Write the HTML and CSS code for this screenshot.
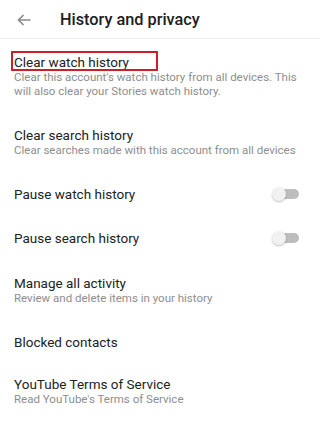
FILE: index.html
```html
<!DOCTYPE html>
<html>
<head>
<meta charset="utf-8">
<link rel="stylesheet" href="styles.css">
</head>
<body>
<div class="header">
  <svg class="back" width="14" height="12" viewBox="0 0 14 12"><path d="M13.5 6H1.5M6.5 1L1.5 6L6.5 11" fill="none" stroke="#8a8a8a" stroke-width="1.6"/></svg>
  <div class="title">History and privacy</div>
</div>
<div class="list">
  <div class="item two">
    <div class="t">Clear watch history</div>
    <div class="s">Clear this account's watch history from all devices. This will also clear your Stories watch history.</div>
    <div class="mark"></div>
  </div>
  <div class="item two">
    <div class="t">Clear search history</div>
    <div class="s">Clear searches made with this account from all devices</div>
  </div>
  <div class="item one row">
    <div class="t">Pause watch history</div>
    <div class="toggle"><div class="track"></div><div class="knob"></div></div>
  </div>
  <div class="item one row">
    <div class="t">Pause search history</div>
    <div class="toggle"><div class="track"></div><div class="knob"></div></div>
  </div>
  <div class="item two">
    <div class="t">Manage all activity</div>
    <div class="s">Review and delete items in your history</div>
  </div>
  <div class="item one blocked">
    <div class="t">Blocked contacts</div>
  </div>
  <div class="item two">
    <div class="t">YouTube Terms of Service</div>
    <div class="s">Read YouTube's Terms of Service</div>
  </div>
</div>
</body>
</html>
```
FILE: styles.css
```css
html, body { margin: 0; padding: 0; background: #fff; }
body { font-family: Roboto, "Liberation Sans", sans-serif; width: 320px; height: 423px; overflow: hidden; }
.header { height: 39px; border-bottom: 1px solid #eeeeee; display: flex; align-items: center; box-sizing: border-box; }
.back { margin-left: 17px; margin-top: 1px; }
.title { margin-left: 29px; font-size: 16.3px; font-weight: 500; color: #202020; padding-top: 1px; }
.list { display: flex; flex-direction: column; padding-top: 0.4px; }
.item { position: relative; padding: 0 14px; }
.item.two { padding-top: 14px; padding-bottom: 14px; }
.item.one { padding-top: 13px; padding-bottom: 13px; }
.item.blocked { padding-top: 13.5px; padding-bottom: 10.5px; }
.t { font-size: 13.5px; line-height: 18px; color: #222; }
.s { font-size: 11.5px; line-height: 13.5px; color: #8e8e8e; }
.row { display: flex; align-items: center; justify-content: space-between; }
.mark { position: absolute; left: 11px; top: 11.6px; width: 143px; height: 16px; border: 2px solid #cc1f2a; }
.toggle { position: relative; width: 28px; height: 14px; margin-right: 6px; }
.track { position: absolute; left: 7px; top: 2px; width: 20px; height: 10px; border-radius: 5px; background: #bdbdbd; }
.knob { position: absolute; left: 0; top: 0; width: 14px; height: 14px; border-radius: 50%; background: #f1f1f1; box-shadow: 0 1px 2px rgba(0,0,0,0.25); }
```
